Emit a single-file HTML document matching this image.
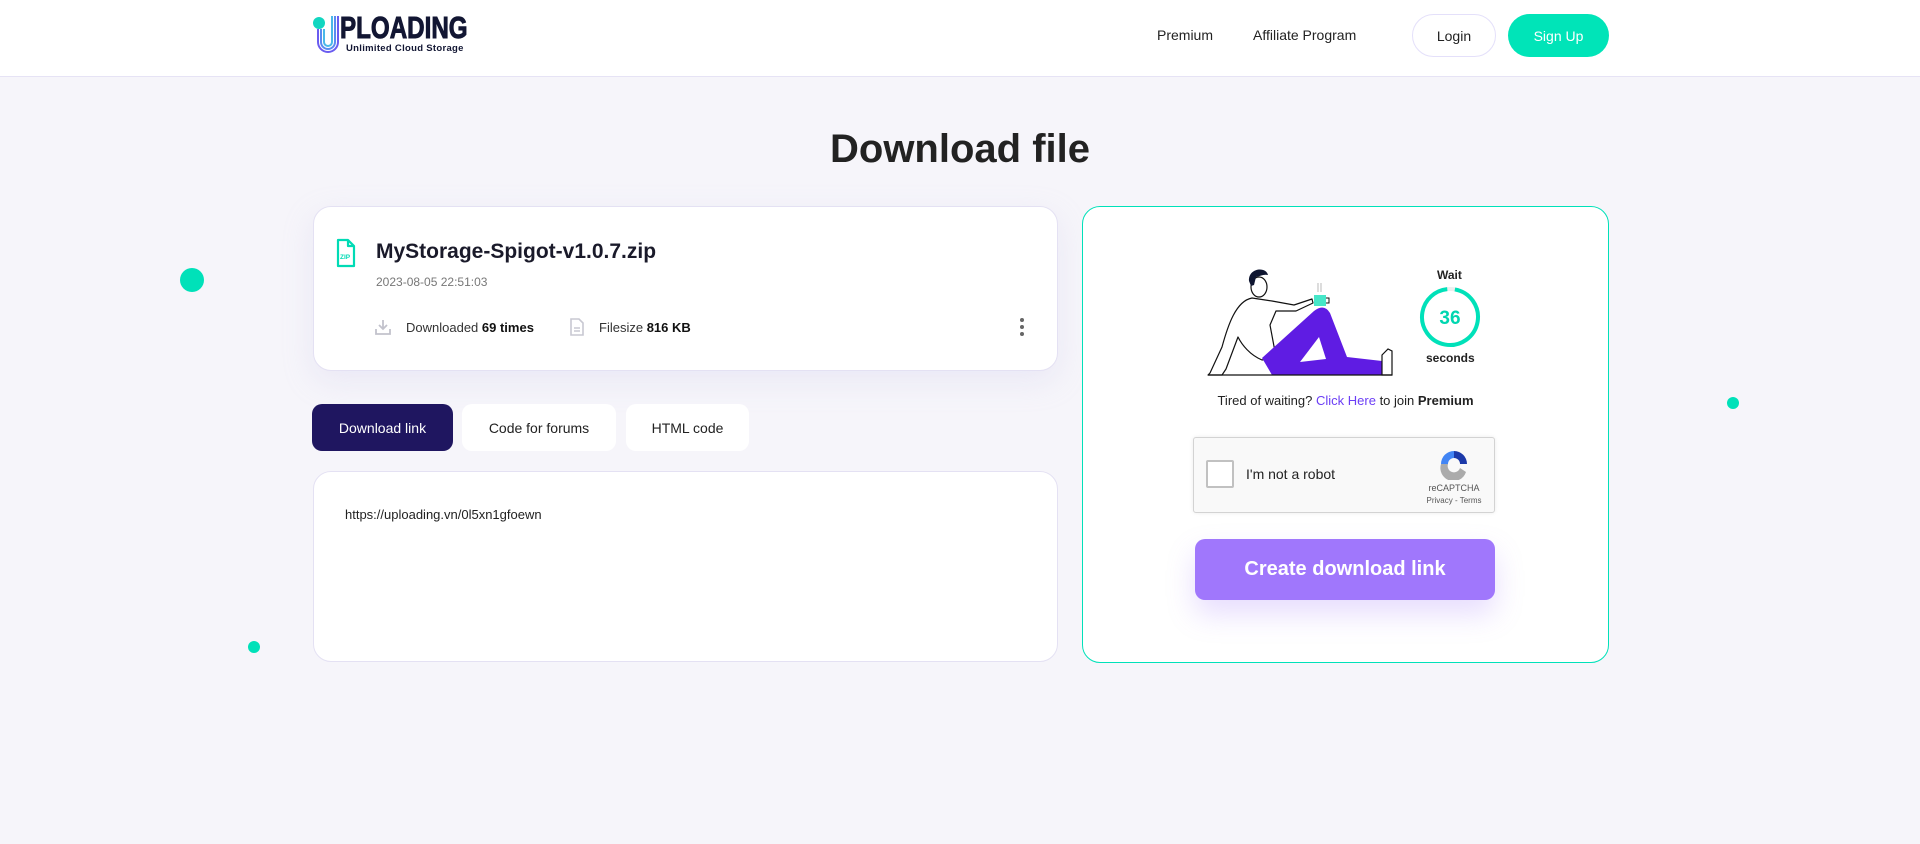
<!DOCTYPE html>
<html><head><meta charset="utf-8"><style>
*{box-sizing:border-box;margin:0;padding:0}
body{width:1920px;height:844px;background:#f6f5fa;font-family:"Liberation Sans",Arial,sans-serif;position:relative;overflow:hidden;color:#1e1e2d}
.hdr{position:absolute;left:0;top:0;width:1920px;height:77px;background:#fff;border-bottom:1px solid #e6e3f5}
.abs{position:absolute}
.nav{font-size:15px;color:#222;top:27px}
.btn{position:absolute;top:14px;height:43px;border-radius:22px;font-size:15px;display:flex;align-items:center;justify-content:center}
.card{position:absolute;background:#fff;border:1px solid #e4e1f3;border-radius:18px}
.tab{position:absolute;top:404px;height:47px;border-radius:10px;background:#fff;font-size:15px;display:flex;align-items:center;justify-content:center;color:#222}
.dot{position:absolute;border-radius:50%;background:#00e1b9}
</style></head><body>
<div class="hdr"></div>
<svg class="abs" style="left:312px;top:14px" width="30" height="42" viewBox="0 0 30 42">
<circle cx="7" cy="9" r="6" fill="#12d6c0"/>
<path d="M6 15 V28 a10 10 0 0 0 20 0 V2" fill="none" stroke="#6a5cf0" stroke-width="2"/>
<path d="M9 15 V28 a7 7 0 0 0 14 0 V2" fill="none" stroke="#5a8cf0" stroke-width="2"/>
<path d="M12 15 V28 a4 4 0 0 0 8 0 V2" fill="none" stroke="#4ab8e8" stroke-width="2"/>
</svg>
<div class="abs" style="left:340px;top:13px;font-weight:900;font-size:31px;letter-spacing:0;color:#121633;transform:scaleX(0.78);transform-origin:left;line-height:30px;-webkit-text-stroke:1px #121633">PLOADING</div>
<div class="abs" style="left:346px;top:43px;font-weight:bold;font-size:9.5px;color:#121633;line-height:11px;letter-spacing:0.3px">Unlimited Cloud Storage</div>
<div class="abs nav" style="left:1157px;font-size:14px">Premium</div>
<div class="abs nav" style="left:1253px;font-size:14px">Affiliate Program</div>
<div class="btn" style="left:1412px;width:84px;border:1px solid #e4e0fa;background:#fff;color:#222;font-size:14px">Login</div>
<div class="btn" style="left:1508px;width:101px;background:#00e4b8;color:#fff;font-size:14px">Sign Up</div>

<div class="abs" style="left:0;width:1920px;top:127px;text-align:center;font-size:40px;font-weight:bold;color:#222">Download file</div>

<div class="dot" style="left:180px;top:268px;width:24px;height:24px"></div>
<div class="dot" style="left:1727px;top:397px;width:12px;height:12px"></div>
<div class="dot" style="left:248px;top:641px;width:12px;height:12px"></div>

<div class="card" style="left:313px;top:206px;width:745px;height:165px;box-shadow:0 10px 30px rgba(200,195,235,.25)"></div>
<svg class="abs" style="left:336px;top:238px" width="20" height="30" viewBox="0 0 20 30"><path d="M2 2 H12 L18 8 V28 H2 Z M12 2 V8 H18" fill="none" stroke="#00dbb5" stroke-width="2.2" stroke-linejoin="round"/><text x="4" y="21" font-size="6.5" fill="#00dbb5" font-family="Liberation Sans" font-weight="bold">ZIP</text></svg>
<div class="abs" style="left:376px;top:240px;font-size:21px;font-weight:bold;color:#1a1a2a">MyStorage-Spigot-v1.0.7.zip</div>
<div class="abs" style="left:376px;top:275px;font-size:12px;color:#777">2023-08-05 22:51:03</div>
<svg class="abs" style="left:375px;top:318px" width="16" height="18" viewBox="0 0 16 18"><path d="M8 2 V11 M4 7 L8 11 L12 7 M1 11 V16 H15 V11" fill="none" stroke="#c2c2cc" stroke-width="1.8"/></svg>
<div class="abs" style="left:406px;top:320px;font-size:13px;color:#333">Downloaded <b style="color:#111">69 times</b></div>
<svg class="abs" style="left:570px;top:318px" width="14" height="18" viewBox="0 0 14 18"><path d="M1 1 H9 L13 5 V17 H1 Z M4 10 H10 M4 13 H10" fill="none" stroke="#c8c8d2" stroke-width="1.6"/></svg>
<div class="abs" style="left:599px;top:320px;font-size:13px;color:#333">Filesize <b style="color:#111">816 KB</b></div>
<div class="abs" style="left:1020px;top:318px;width:4px">
<div style="width:4px;height:4px;border-radius:2px;background:#666;margin-bottom:3px"></div><div style="width:4px;height:4px;border-radius:2px;background:#666;margin-bottom:3px"></div><div style="width:4px;height:4px;border-radius:2px;background:#666"></div></div>

<div class="tab" style="left:312px;width:141px;background:#1f1660;color:#fff;font-size:14px">Download link</div>
<div class="tab" style="left:462px;width:154px;font-size:14px">Code for forums</div>
<div class="tab" style="left:626px;width:123px;font-size:14px">HTML code</div>

<div class="card" style="left:313px;top:471px;width:745px;height:191px"></div>
<div class="abs" style="left:345px;top:507px;font-size:13px;color:#222">https://uploading.vn/0l5xn1gfoewn</div>

<div class="card" style="left:1082px;top:206px;width:527px;height:457px;border:1px solid #00e1b9"></div>
<svg class="abs" style="left:1206px;top:265px" width="192" height="112" viewBox="0 0 192 112">
<path d="M46 33 C30 36 22 60 16 82 L4 108 L2 110 H16 L20 104 L32 72 C36 80 44 90 56 95 L70 92 L64 60 L70 46 L90 46 L107 38 L106 34 L88 40 L66 36 Z" fill="#fff" stroke="#111" stroke-width="1.2" stroke-linejoin="round"/>
<path d="M56 93 L108 46 Q118 38 124 48 L141 92 L176 96 V110 H66 Z" fill="#5f1ce3"/>
<path d="M94 97 L120 94 L113 72 Z" fill="#fff"/>
<path d="M176 90 L182 84 L186 86 V110 H176 Z" fill="#fff" stroke="#111" stroke-width="1.2"/>
<path d="M2 110 H186" stroke="#111" stroke-width="1.2"/>
<rect x="108" y="30" width="12" height="11" fill="#46e6c8"/>
<path d="M120 33 h3 v5 h-3" fill="none" stroke="#111" stroke-width="1"/>
<ellipse cx="53" cy="22" rx="8" ry="10" fill="#fff" stroke="#111" stroke-width="1.2"/>
<path d="M43 16 C42 3 60 1 62 10 C58 9 54 11 50 12 L48 20 L45 21 Z" fill="#0e1530"/>
<path d="M112 27 V18 M115 27 V18" stroke="#aaa" stroke-width="0.8"/>
</svg>
<div class="abs" style="left:1437px;top:268px;font-size:12px;font-weight:bold;color:#222">Wait</div>
<svg class="abs" style="left:1419px;top:286px" width="62" height="62" viewBox="0 0 62 62"><circle cx="31" cy="31" r="28" fill="none" stroke="#eee" stroke-width="4"/><circle cx="31" cy="31" r="28" fill="none" stroke="#00e1b9" stroke-width="4" stroke-dasharray="168 176" transform="rotate(-80 31 31)"/><text x="31" y="38" text-anchor="middle" font-size="19" font-weight="bold" fill="#00d6b0" font-family="Liberation Sans">36</text></svg>
<div class="abs" style="left:1426px;top:351px;font-size:12px;font-weight:bold;color:#222">seconds</div>
<div class="abs" style="left:1082px;width:527px;top:393px;text-align:center;font-size:13px;color:#222">Tired of waiting? <span style="color:#6b3ef5">Click Here</span> to join <b>Premium</b></div>
<div class="abs" style="left:1193px;top:437px;width:302px;height:76px;background:#f9f9f9;border:1px solid #d3d3d3;border-radius:3px;box-shadow:0 0 4px rgba(0,0,0,.08)"></div>
<div class="abs" style="left:1206px;top:460px;width:28px;height:28px;border:2px solid #c1c1c1;border-radius:2px;background:#fff"></div>
<div class="abs" style="left:1246px;top:466px;font-size:14px;color:#222">I'm not a robot</div>
<svg class="abs" style="left:1438px;top:448px" width="32" height="32" viewBox="0 0 32 32"><path d="M16 3 A13 13 0 0 1 29 16 H22 A6 6 0 0 0 16 10 Z" fill="#1c3aa9"/><path d="M3 16 A13 13 0 0 1 16 3 V10 A6 6 0 0 0 10 16 Z" fill="#4285f4"/><path d="M3 16 H10 A6 6 0 0 0 22 20 L28 24 A13 13 0 0 1 3 16 Z" fill="#ababab"/></svg>
<div class="abs" style="left:1420px;top:483px;width:68px;text-align:center;font-size:9px;color:#555">reCAPTCHA</div>
<div class="abs" style="left:1420px;top:496px;width:68px;text-align:center;font-size:8px;color:#555">Privacy - Terms</div>
<div class="abs" style="left:1195px;top:539px;width:300px;height:61px;background:#a077fc;border-radius:10px;box-shadow:0 14px 28px rgba(160,120,250,.25);color:#fff;font-size:20px;font-weight:bold;display:flex;align-items:center;justify-content:center">Create download link</div>
</body></html>
